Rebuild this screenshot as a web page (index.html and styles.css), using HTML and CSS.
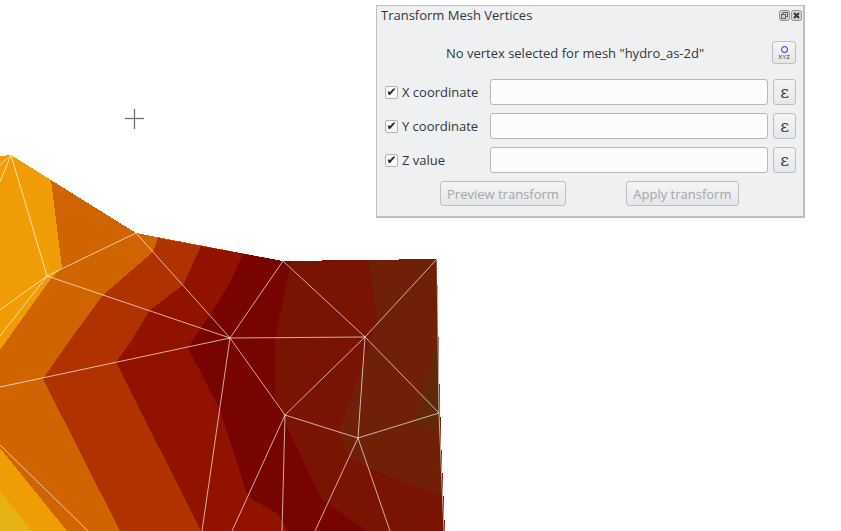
FILE: index.html
```html
<!DOCTYPE html>
<html lang="en">
<head>
    <title>Transform Mesh Vertices</title>
    <meta charset="utf-8">
    <link rel="stylesheet" href="styles.css">
</head>
<body>

    <!-- Map canvas with the mesh contours -->
    <svg class="mapCanvas" width="841" height="531" viewBox="0 0 841 531">
        <g class="meshBands">
            <polygon fill="#f09c04" points="0,156 11,155 51,180 136,233 283,261 437,259 438,310 440,415 445,531 0,531"/>
            <polygon fill="#e6b214" points="0,491 32,531 0,531"/>
            <polygon fill="#d06400" points="51,180 136,233 283,261 437,259 438,310 440,415 445,531 67,531 0,448 0,350 52,277 62,268"/>
            <polygon fill="#b03200" points="158,238 283,261 437,259 438,310 440,415 445,531 120,531 43,379 70,340 103,295 153,252"/>
            <polygon fill="#921200" points="201,246 283,261 437,259 438,310 440,415 445,531 201,531 116,362 132,340 150,310 183,285"/>
            <polygon fill="#780400" points="243,254 283,261 437,259 438,310 440,415 445,531 288,531 277,513 248,497 220,410 188,348 193,340 213,310 230,283"/>
            <polygon fill="#7a1402" points="290,261 437,259 438,310 440,415 445,531 368,531 322,500 285,423 275,397 275,340 290,267"/>
            <polygon fill="#6f2006" points="369,260 437,259 438,310 440,415 443,497 367,467 350,457 338,433 367,353 377,317"/>
            <polygon fill="#632807" points="438,333 441,433 415,423 423,397"/>
        </g>

        <g class="meshLines">
            <line x1="11" y1="155" x2="0" y2="165"/>
            <line x1="11" y1="155" x2="0" y2="182"/>
            <line x1="11" y1="155" x2="47" y2="276"/>
            <line x1="47" y1="276" x2="0" y2="310"/>
            <line x1="47" y1="276" x2="0" y2="336"/>
            <line x1="47" y1="276" x2="136" y2="233"/>
            <line x1="47" y1="276" x2="230" y2="338"/>
            <line x1="136" y1="233" x2="230" y2="338"/>
            <line x1="283" y1="261" x2="230" y2="338"/>
            <line x1="283" y1="261" x2="365" y2="337"/>
            <line x1="437" y1="259" x2="365" y2="337"/>
            <line x1="0" y1="387" x2="230" y2="338"/>
            <line x1="230" y1="338" x2="365" y2="337"/>
            <line x1="230" y1="338" x2="285" y2="415"/>
            <line x1="230" y1="338" x2="202" y2="531"/>
            <line x1="365" y1="337" x2="285" y2="415"/>
            <line x1="365" y1="337" x2="439" y2="413"/>
            <line x1="365" y1="337" x2="358" y2="438"/>
            <line x1="285" y1="415" x2="358" y2="438"/>
            <line x1="358" y1="438" x2="439" y2="413"/>
            <line x1="285" y1="415" x2="232" y2="531"/>
            <line x1="285" y1="415" x2="282" y2="531"/>
            <line x1="358" y1="438" x2="315" y2="531"/>
            <line x1="358" y1="438" x2="390" y2="531"/>
            <line x1="0" y1="445" x2="88" y2="531"/>
            <line x1="437" y1="259" x2="439" y2="413"/>
            <line x1="439" y1="413" x2="444" y2="531"/>
        </g>

        <!-- Cursor -->
        <g class="cursorHalo">
            <line x1="125" y1="118.500" x2="144" y2="118.500"/>
            <line x1="134.500" y1="109" x2="134.500" y2="129"/>
        </g>
        <g class="cursorLines">
            <line x1="125" y1="118.500" x2="144" y2="118.500"/>
            <line x1="134.500" y1="109" x2="134.500" y2="129"/>
        </g>
    </svg>

    <!-- Dock window -->
    <div class="dockPanel">
        <div class="titleBar">
            <span class="titleText">Transform Mesh Vertices</span>
            <svg class="windowIcon" width="11" height="11" viewBox="0 0 11 11">
                <rect x="0.500" y="0.500" width="10" height="10" rx="2" fill="#d4d5d6" stroke="#8d9093"/>
                <rect x="4" y="2.500" width="4.500" height="4" fill="none" stroke="#5d6063"/>
                <rect x="2.500" y="4.500" width="4" height="4" fill="#d4d5d6" stroke="#5d6063"/>
            </svg>
            <svg class="windowIcon" width="11" height="11" viewBox="0 0 11 11">
                <rect x="0.500" y="0.500" width="10" height="10" rx="2" fill="#d4d5d6" stroke="#8d9093"/>
                <path d="M3 3 L8 8 M8 3 L3 8" stroke="#33363a" stroke-width="2"/>
            </svg>
        </div>

        <div class="messageRow">
            <span class="messageText">No vertex selected for mesh "hydro_as-2d"</span>
            <button class="toolButton xyzButton">
                <span class="xyzCircle"></span>
                <span class="xyzText">XYZ</span>
            </button>
        </div>

        <div class="fieldRow">
            <span class="checkBox">✔</span>
            <span class="fieldLabel">X coordinate</span>
            <input class="fieldInput" type="text">
            <button class="toolButton epsButton">ε</button>
        </div>
        <div class="fieldRow">
            <span class="checkBox">✔</span>
            <span class="fieldLabel">Y coordinate</span>
            <input class="fieldInput" type="text">
            <button class="toolButton epsButton">ε</button>
        </div>
        <div class="fieldRow">
            <span class="checkBox">✔</span>
            <span class="fieldLabel">Z value</span>
            <input class="fieldInput" type="text">
            <button class="toolButton epsButton">ε</button>
        </div>

        <div class="actionRow">
            <button class="actionButton">Preview transform</button>
            <button class="actionButton applyButton">Apply transform</button>
        </div>
    </div>

</body>
</html>
```

FILE: styles.css
```css
/* Page and map canvas */
body{
    margin: 0;
    width: 841px;
    height: 531px;
    overflow: hidden;
    position: relative;
    background-color: #ffffff;
    font-family: "Open Sans", "Noto Sans", sans-serif;
    font-size: 13px;
    color: #31363b;
}

.mapCanvas{
    position: absolute;
    left: 0;
    top: 0;
}

.meshBands polygon{
    shape-rendering: crispEdges;
}

.meshLines line{
    stroke: #ffffff;
    stroke-opacity: 0.66;
    stroke-width: 1;
}

.cursorHalo line{
    stroke: #ececec;
    stroke-width: 3;
}

.cursorLines line{
    stroke: #6e6e6e;
    stroke-width: 1;
}

/* Floating dock window */
.dockPanel{
    position: absolute;
    left: 376px;
    top: 5px;
    width: 429px;
    height: 213px;
    box-sizing: border-box;
    border: 1px solid #bcbebf;
    border-bottom-width: 2px;
    border-right-width: 2px;
    background-color: #eff0f1;
    padding: 0 7px 0 8px;
}

.titleBar{
    display: flex;
    align-items: center;
    gap: 1px;
    height: 18px;
    margin-left: -4px;
    margin-right: -6px;
}

.titleText{
    flex: 1;
}

.windowIcon{
    margin-top: 1px;
}

.messageRow{
    display: flex;
    align-items: center;
    height: 23px;
    margin-top: 17px;
    margin-bottom: 15px;
}

.messageText{
    flex: 1;
    text-align: center;
    padding-right: 7px;
}

.toolButton{
    box-sizing: border-box;
    width: 24px;
    padding: 0;
    border: 1px solid #bcbebf;
    border-radius: 3px;
    background: linear-gradient(#f4f5f5, #e6e7e8);
}

.xyzButton{
    height: 23px;
    display: flex;
    flex-direction: column;
    align-items: center;
    justify-content: center;
    gap: 1px;
}

.xyzCircle{
    width: 5px;
    height: 5px;
    border: 1.500px solid #1a1ad0;
    border-radius: 50%;
}

.xyzText{
    font-family: "Liberation Sans", sans-serif;
    font-size: 6px;
    line-height: 6px;
    color: #3a3d40;
}

.fieldRow{
    display: flex;
    align-items: center;
    height: 26px;
    margin-bottom: 8px;
}

.checkBox{
    box-sizing: border-box;
    width: 13px;
    height: 13px;
    border: 1px solid #b0b2b4;
    border-radius: 2px;
    background-color: #fcfcfc;
    font-family: "DejaVu Sans", sans-serif;
    font-size: 12px;
    line-height: 11px;
    text-align: center;
    color: #232629;
    margin-right: 4px;
}

.fieldLabel{
    width: 88px;
}

.fieldInput{
    box-sizing: border-box;
    width: 279px;
    height: 26px;
    margin: 0 5px 0 0;
    border: 1px solid #b4b6b8;
    border-radius: 3px;
    background-color: #fcfcfc;
}

.epsButton{
    width: 23px;
    height: 26px;
    font-family: "DejaVu Serif", serif;
    font-size: 17px;
    line-height: 20px;
    color: #4a3a58;
}

.actionRow{
    display: flex;
    gap: 60px;
    padding-left: 55px;
}

.actionButton{
    box-sizing: border-box;
    height: 25px;
    padding: 0 6px;
    border: 1px solid #bcbebf;
    border-radius: 3px;
    background: linear-gradient(#f4f5f5, #e6e7e8);
    font-family: "Open Sans", "Noto Sans", sans-serif;
    font-size: 13px;
    color: #a4a6a8;
}

.applyButton{
    width: 113px;
}
```
